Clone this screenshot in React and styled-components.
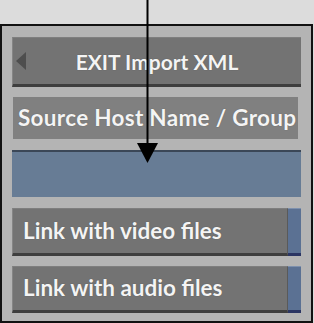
import React from "react";
import styled, { createGlobalStyle } from "styled-components";

const GlobalStyle = createGlobalStyle`
  html, body {
    margin: 0;
    padding: 0;
    background: #dcdcdc;
  }
`;

const Page = styled.div`
  position: relative;
  width: 314px;
  height: 323px;
  padding-top: 24px;
  box-sizing: border-box;
  background: #dcdcdc;
  font-family: Lato, "Open Sans", sans-serif;
  font-weight: 700;
  color: #f4f4f4;
  overflow: hidden;
`;

const Panel = styled.div`
  width: 313px;
  height: 299px;
  box-sizing: border-box;
  border: 2px solid #111;
  background: #b4b4b4;
  padding: 11px 10px 0;
  display: flex;
  flex-direction: column;
`;

const Text = styled.span`
  font-size: ${(p) => p.$size || 22}px;
  letter-spacing: ${(p) => p.$spacing || 0}px;
  line-height: 1;
  white-space: nowrap;
  text-shadow: 0 0 1px rgba(0, 0, 0, 0.35);
`;

const ExitButton = styled.div`
  position: relative;
  height: 46px;
  background: #737373;
  border-top: 1px solid #7e7e7e;
  border-left: 1px solid #858585;
  border-bottom: 3px solid #3e3e3e;
  display: flex;
  align-items: center;
  justify-content: center;
  box-sizing: content-box;
`;

const BackArrow = styled.svg`
  position: absolute;
  left: 2px;
  top: 14px;
`;

const Label = styled.div`
  margin: 10px 3px 0 1px;
  height: 42px;
  background: #808080;
  display: flex;
  align-items: center;
  padding-left: 5px;
`;

const Field = styled.div`
  margin-top: 11px;
  height: 45px;
  background: #677c95;
  border-top: 2px solid #3b4757;
`;

const LinkButton = styled.div`
  margin-top: ${(p) => p.$gap}px;
  height: ${(p) => p.$height}px;
  display: flex;
`;

const LinkMain = styled.div`
  flex: 1;
  background: #737373;
  border-top: 1px solid #7e7e7e;
  border-left: 1px solid #858585;
  border-bottom: 3px solid #3e3e3e;
  border-right: 1px solid #5a5a5a;
  display: flex;
  align-items: center;
  padding-left: 10px;
`;

const LinkStrip = styled.div`
  width: 13px;
  background: #5b7193;
  border-top: 1px solid #7d90ad;
  border-bottom: 3px solid #2b3563;
`;

const Pointer = styled.svg`
  position: absolute;
  left: 0;
  top: 0;
  pointer-events: none;
`;

export default function App() {
  return (
    <>
      <GlobalStyle />
      <Page>
        <Panel>
          <ExitButton>
            <BackArrow width="12" height="20" viewBox="0 0 12 20">
              <polygon points="1,9 11,0 11,18" fill="#4e4e4e" />
            </BackArrow>
            <Text $size={21}>EXIT Import XML</Text>
          </ExitButton>
          <Label>
            <Text $size={22.5} $spacing={0.3}>Source Host Name / Group</Text>
          </Label>
          <Field />
          <LinkButton $gap={11} $height={48}>
            <LinkMain>
              <Text $size={22.5}>Link with video files</Text>
            </LinkMain>
            <LinkStrip />
          </LinkButton>
          <LinkButton $gap={10} $height={47}>
            <LinkMain>
              <Text $size={22.5}>Link with audio files</Text>
            </LinkMain>
            <LinkStrip />
          </LinkButton>
        </Panel>
        <Pointer width="314" height="323" viewBox="0 0 314 323">
          <line x1="147.5" y1="0" x2="147.5" y2="150" stroke="#000" strokeWidth="2" />
          <polygon points="137,143 158,143 147.5,163" fill="#000" />
        </Pointer>
      </Page>
    </>
  );
}
